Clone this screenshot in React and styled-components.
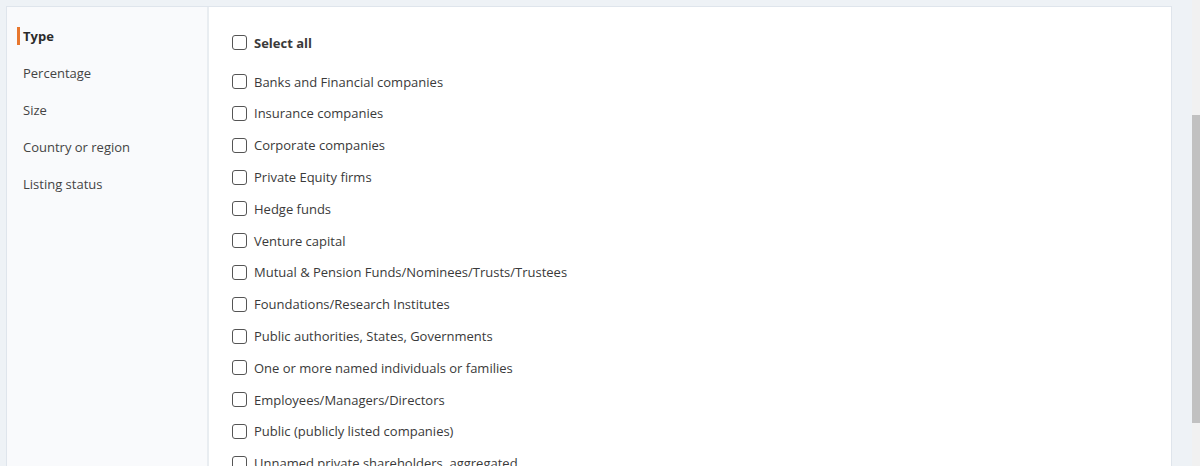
import React from 'react'
import styled, { createGlobalStyle } from 'styled-components'

const GlobalStyle = createGlobalStyle`
  html, body { margin: 0; padding: 0; height: 100%; overflow: hidden; }
  body {
    background: #eef2f6;
    font-family: "Open Sans", "Liberation Sans", sans-serif;
    color: #333;
  }
`

const Page = styled.div`
  display: flex;
  height: 466px;
`

const Content = styled.div`
  flex: 1;
  padding: 6px 20px 0 6px;
  overflow: hidden;
`

const ScrollTrack = styled.div`
  width: 8px;
  background: #f1f1f1;
  padding-top: 115px;
`

const ScrollThumb = styled.div`
  height: 308px;
  background: #c1c1c1;
`

const Card = styled.div`
  display: flex;
  height: 520px;
  background: #fff;
  border: 1px solid #dfe5ec;
  border-bottom: none;
`

const Sidebar = styled.nav`
  width: 200px;
  background: #f9fafc;
  border-right: 2px solid #e9edf1;
  padding-top: 20px;
  display: flex;
  flex-direction: column;
  gap: 19px;
`

const NavItem = styled.div`
  height: 18px;
  line-height: 18px;
  font-size: 13px;
  margin-left: 10px;
  padding-left: 3px;
  border-left: 3px solid ${p => (p.$active ? '#e8772e' : 'transparent')};
  font-weight: ${p => (p.$active ? 700 : 400)};
  color: ${p => (p.$active ? '#2b2b2b' : '#444')};
`

const Main = styled.div`
  flex: 1;
  padding: 20px 0 0 23px;
`

const Row = styled.label`
  display: flex;
  align-items: center;
  gap: 7px;
  height: 31.8px;
  font-size: 13px;
  color: #3a3a3a;
  font-weight: ${p => (p.$bold ? 700 : 400)};
  margin-bottom: ${p => (p.$bold ? '7px' : '0')};
`

const Box = styled.span`
  width: 13px;
  height: 13px;
  border: 1.5px solid #555;
  border-radius: 3px;
  flex: none;
`

const navItems = ['Type', 'Percentage', 'Size', 'Country or region', 'Listing status']

const types = [
  'Banks and Financial companies',
  'Insurance companies',
  'Corporate companies',
  'Private Equity firms',
  'Hedge funds',
  'Venture capital',
  'Mutual & Pension Funds/Nominees/Trusts/Trustees',
  'Foundations/Research Institutes',
  'Public authorities, States, Governments',
  'One or more named individuals or families',
  'Employees/Managers/Directors',
  'Public (publicly listed companies)',
  'Unnamed private shareholders, aggregated',
]

export default function App() {
  return (
    <>
      <GlobalStyle />
      <Page>
        <Content>
          <Card>
            <Sidebar>
              {navItems.map((n, i) => (
                <NavItem key={n} $active={i === 0}>{n}</NavItem>
              ))}
            </Sidebar>
            <Main>
              <Row $bold>
                <Box />
                Select all
              </Row>
              {types.map(t => (
                <Row key={t}>
                  <Box />
                  {t}
                </Row>
              ))}
            </Main>
          </Card>
        </Content>
        <ScrollTrack>
          <ScrollThumb />
        </ScrollTrack>
      </Page>
    </>
  )
}
